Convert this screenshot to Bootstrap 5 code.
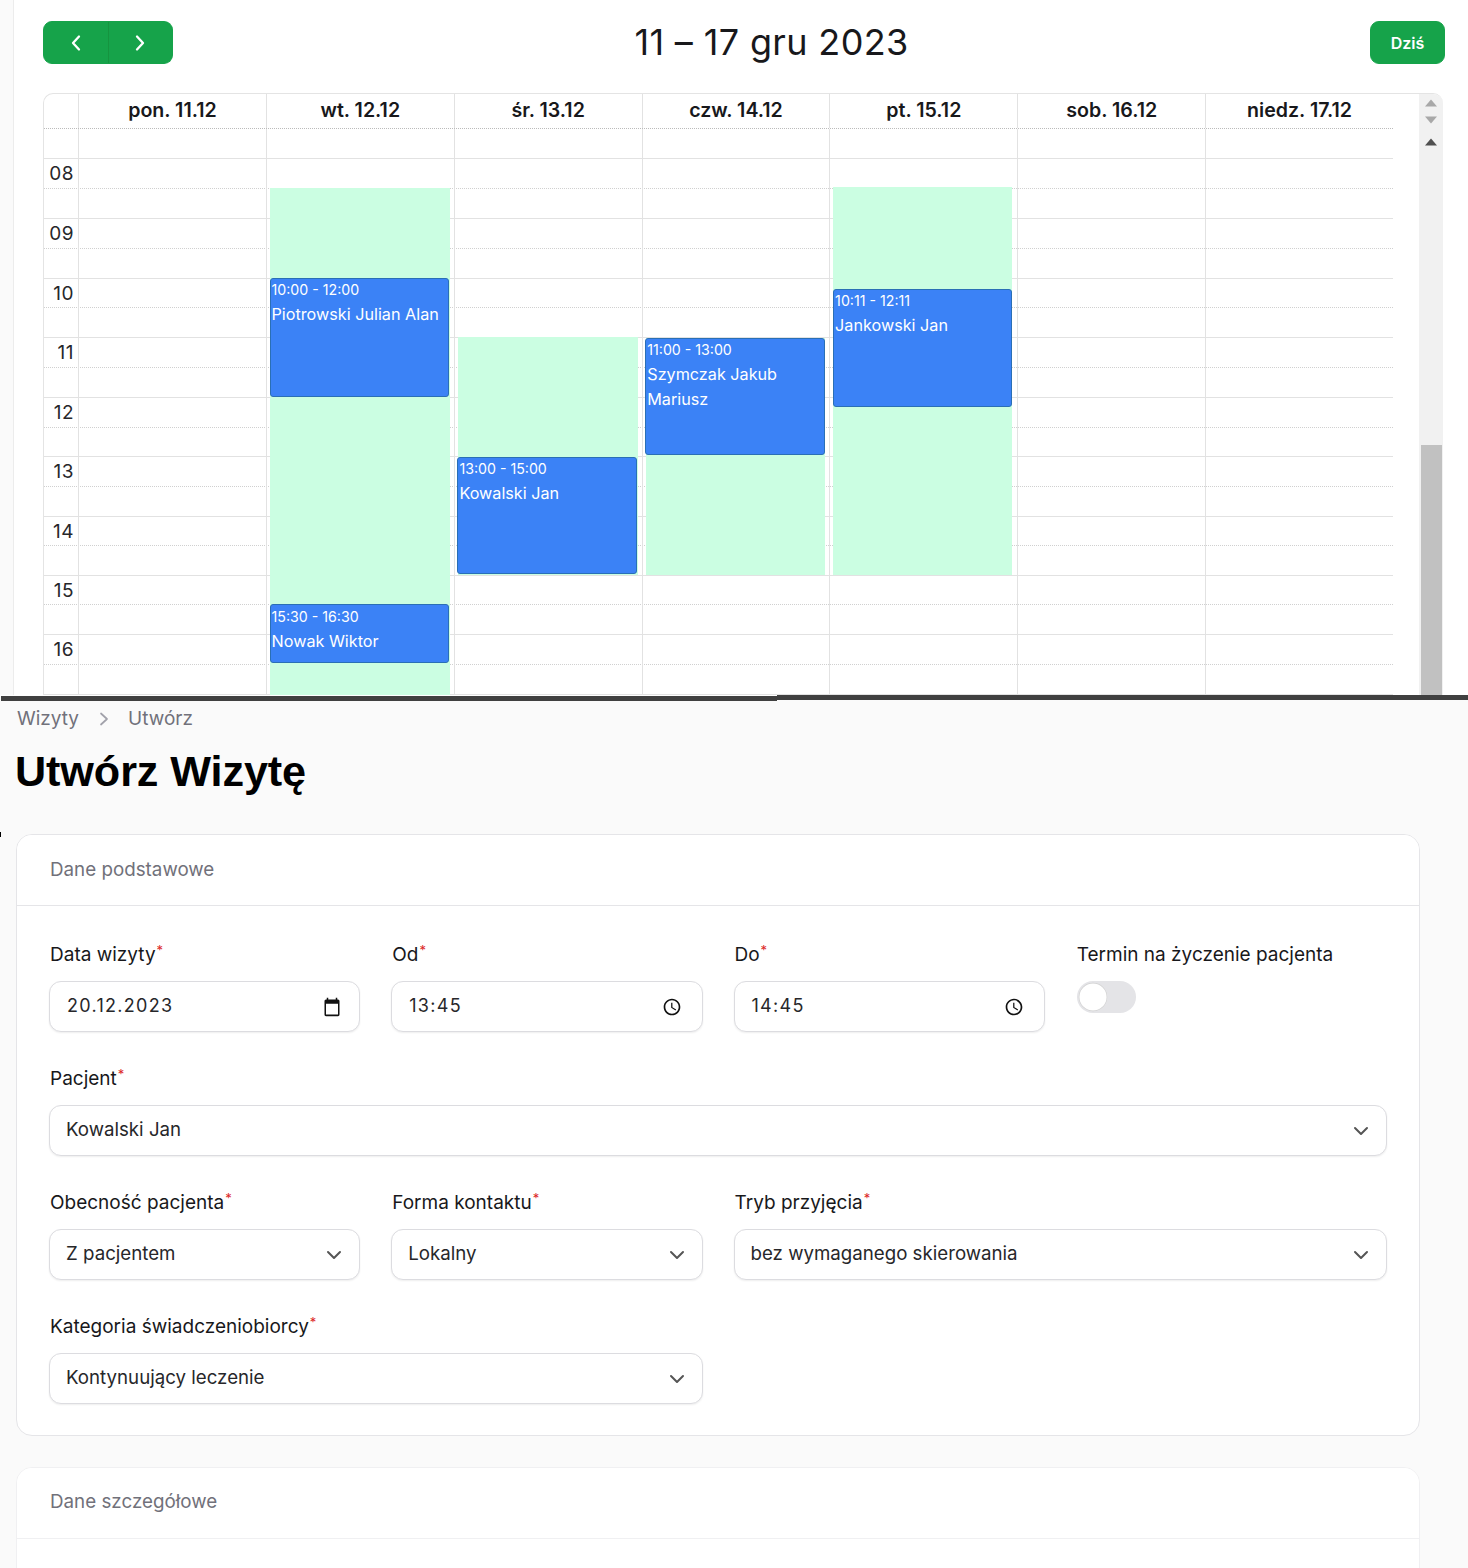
<!doctype html>
<html lang="pl">
<head>
<meta charset="utf-8">
<title>Utwórz Wizytę</title>
<link href="https://cdn.jsdelivr.net/npm/bootstrap@5.3.0/dist/css/bootstrap.min.css" rel="stylesheet">
<style>
html,body{height:1568px;overflow:hidden;background:#fafafa;font-family:Inter,"Liberation Sans",sans-serif;color:#18181b}
.top-area{height:695px;background:#fff;overflow:hidden}
.side-strip{width:14px;background:#fafafa;border-right:1px solid #ececec;flex:none}
.cal-main{padding:21px 23px 0 29px;min-width:0}
.cal-toolbar{height:43px;margin-bottom:29px}
.btn-cal{--bs-btn-bg:#16a34a;--bs-btn-border-color:#16a34a;--bs-btn-hover-bg:#16a34a;--bs-btn-color:#fff;--bs-btn-hover-color:#fff;--bs-btn-font-size:16px;--bs-btn-font-weight:600;--bs-btn-border-radius:9px;height:43px}
.btn-nav{width:65.5px;padding:0;display:flex;align-items:center;justify-content:center}
.btn-nav+.btn-nav{border-left-color:#15943f}
.btn-today{width:75px;padding:0}
.cal-title{font-size:36px;font-weight:400;line-height:43px;margin:0;color:#18181b;letter-spacing:.35px}
.cal-frame{height:602px;width:1400px;border:solid #e4e4e4;border-width:1px 0 0 1px;border-top-left-radius:10px;border-top-right-radius:10px;overflow:hidden}
.cal-grid{width:1349px;flex:none}
.cal-gap{width:26px;flex:none}
.cal-head{height:35px;display:grid;grid-template-columns:34px repeat(7,1fr);border-bottom:1px dotted #bbb}
.cal-head>div{border-left:1px solid #e2e2e2;text-align:center;font-size:19.6px;font-weight:600;line-height:33px;color:#18181b}
.cal-head>div:first-child{border-left:0}
.cal-body{position:relative;height:566px;overflow:hidden}
.slot-row{height:30px;border-top:1px dotted #d0d0d0}
.slot-row.hour{border-top:1px solid #e2e2e2}
.slot-row:first-child{border-top:0}
.slot-row.short-row{height:29px}
.slot-label{width:30px;text-align:right;font-size:19px;line-height:29px;color:#27272a;letter-spacing:.5px}
.cal-cols{position:absolute;top:0;bottom:0;left:34px;right:0;display:grid;grid-template-columns:repeat(7,1fr)}
.cal-cols>div{position:relative;border-left:1px solid #e2e2e2}
.zone{position:absolute;left:3px;right:4px;background:#cbfee2}
.zone-narrow{right:5px}
.appt{position:absolute;left:2.7px;right:4.85px;background:#3b82f6;border:1px solid #2a6fb5;border-radius:3px;color:#fff;padding:0 1px;overflow:hidden}
.appt-nudge{padding-top:1px}
.appt-time{font-size:14.2px;line-height:22px;display:block}
.appt-name{font-size:16.2px;line-height:25px;display:block;margin-top:1px}
.fake-scroll{width:25px;flex:none;background:#f1f1f1;position:relative;border-right:1px solid #e8e8e8}
.fake-scroll svg{display:block;position:absolute;left:6px}
.fake-thumb{position:absolute;left:2px;width:21px;top:351px;bottom:0;background:#c1c1c1}
.seam{height:6px;display:flex;background:linear-gradient(#fff 1px,#fafafa 1px)}
.seam-a{width:776px;margin:1px 0 0 1px;height:5px;background:#404040}
.seam-b{flex:1;height:5px;background:#404040}
.form-area{padding:0 48px 0 16px;position:relative}
.tick{position:absolute;left:0;top:131px;width:1px;height:5px;background:#000}
.crumbs{font-size:19px;line-height:24px;color:#71717a;padding:6px 0 0 1px;gap:19.5px}
.page-title{font-family:"Liberation Sans",Arial,sans-serif;font-weight:700;font-size:43.2px;line-height:52px;color:#000;margin:14px 0 37px -1px;letter-spacing:-.1px}
.panel{--bs-card-border-color:#e5e5e8;--bs-card-border-radius:16px;--bs-card-inner-border-radius:15px;--bs-card-cap-bg:#fff;--bs-card-bg:#fff;margin-bottom:31px}
.panel-soft{--bs-card-border-color:#f0f0f2}
.panel .card-header{height:71px;padding:0 33px;display:flex;align-items:center;font-size:18.8px;color:#71717a;border-bottom-color:#e5e5e8}
.panel-soft .card-header{border-bottom-color:#f0f0f2;padding-bottom:2px}
.panel .card-body{padding:33px 32px 31px 32px}
.field-grid{display:grid;grid-template-columns:repeat(4,1fr);column-gap:31px;row-gap:31px}
.span-2{grid-column:span 2}
.span-4{grid-column:span 4}
.fld-label{display:block;font-size:19px;line-height:24px;height:24px;margin:4px 0 14px 1px;color:#18181b}
.req{color:#dc2626;font-size:13px;position:relative;top:-6px;line-height:0;margin-left:1px}
.fld-box{height:51px;border:1px solid #dcdce0;border-radius:12px;box-shadow:0 1px 2px rgba(0,0,0,.07);font-size:18px;color:#27272a;padding:0 20px 2px 17px;background-color:#fff}
.fld-box.date-box{padding-right:18px}
.fld-box svg{position:relative;top:1px}
.fld-box .fld-val{letter-spacing:1.3px}
.fld-sel{height:51px;border:1px solid #dcdce0;border-radius:12px;box-shadow:0 1px 2px rgba(0,0,0,.07);font-size:18.7px;color:#27272a;padding:0 40px 0 16px;background-position:right 17px center;background-size:16px 16px;--bs-form-select-bg-img:url("data:image/svg+xml,%3csvg xmlns='http://www.w3.org/2000/svg' viewBox='0 0 16 16'%3e%3cpath fill='none' stroke='%23555' stroke-linecap='round' stroke-linejoin='round' stroke-width='2' d='m2 5 6 6 6-6'/%3e%3c/svg%3e")}
.toggle-wrap{padding:0;margin:1px 0 0 1px;min-height:0;height:33px}
.toggle-wrap .form-check-input{width:59px;height:32px;margin:0;background-color:#e4e4e7;border:0;float:none;--bs-form-switch-bg:none;background-image:url("data:image/svg+xml,%3csvg xmlns='http://www.w3.org/2000/svg' viewBox='-4 -4 8 8'%3e%3ccircle r='3.55' fill='%23d0d0d0'/%3e%3ccircle r='3.4' fill='%23fff'/%3e%3c/svg%3e");background-position:left center}
</style>
</head>
<body>
<div class="top-area d-flex">
  <div class="side-strip"></div>
  <div class="cal-main flex-grow-1">
    <div class="cal-toolbar d-flex justify-content-between align-items-center">
      <div class="btn-group" role="group">
        <button type="button" class="btn btn-cal btn-nav" aria-label="Poprzedni"><svg width="14" height="18" viewBox="0 0 14 18"><path d="M10 2.500 4 9l6 6.500" fill="none" stroke="#fff" stroke-width="2.300" stroke-linecap="round" stroke-linejoin="round"/></svg></button>
        <button type="button" class="btn btn-cal btn-nav" aria-label="Następny"><svg width="14" height="18" viewBox="0 0 14 18"><path d="M4 2.500 10 9l-6 6.500" fill="none" stroke="#fff" stroke-width="2.300" stroke-linecap="round" stroke-linejoin="round"/></svg></button>
      </div>
      <h2 class="cal-title">11 – 17 gru 2023</h2>
      <button type="button" class="btn btn-cal btn-today">Dziś</button>
    </div>
    <div class="cal-frame d-flex">
      <div class="cal-grid">
        <div class="cal-head">
          <div></div><div>pon. 11.12</div><div>wt. 12.12</div><div>śr. 13.12</div><div>czw. 14.12</div><div>pt. 15.12</div><div>sob. 16.12</div><div>niedz. 17.12</div>
        </div>
        <div class="cal-body">
          <div class="slot-row short-row"></div>
          <div class="slot-row hour"><div class="slot-label">08</div></div>
          <div class="slot-row"></div>
          <div class="slot-row hour"><div class="slot-label">09</div></div>
          <div class="slot-row"></div>
          <div class="slot-row hour short-row"><div class="slot-label">10</div></div>
          <div class="slot-row"></div>
          <div class="slot-row hour"><div class="slot-label">11</div></div>
          <div class="slot-row"></div>
          <div class="slot-row hour"><div class="slot-label">12</div></div>
          <div class="slot-row short-row"></div>
          <div class="slot-row hour"><div class="slot-label">13</div></div>
          <div class="slot-row"></div>
          <div class="slot-row hour short-row"><div class="slot-label">14</div></div>
          <div class="slot-row"></div>
          <div class="slot-row hour short-row"><div class="slot-label">15</div></div>
          <div class="slot-row"></div>
          <div class="slot-row hour"><div class="slot-label">16</div></div>
          <div class="slot-row"></div>
          <div class="slot-row hour"></div>
          <div class="cal-cols">
            <div></div>
            <div>
              <div class="zone" style="top:59px;height:520px"></div>
              <div class="appt" style="top:149px;height:119px"><span class="appt-time">10:00 - 12:00</span><span class="appt-name">Piotrowski Julian Alan</span></div>
              <div class="appt appt-nudge" style="top:475px;height:59px"><span class="appt-time">15:30 - 16:30</span><span class="appt-name">Nowak Wiktor</span></div>
            </div>
            <div>
              <div class="zone" style="top:208px;height:238px"></div>
              <div class="appt" style="top:328px;height:117px"><span class="appt-time">13:00 - 15:00</span><span class="appt-name">Kowalski Jan</span></div>
            </div>
            <div>
              <div class="zone" style="top:209px;height:237px"></div>
              <div class="appt" style="top:209px;height:117px"><span class="appt-time">11:00 - 13:00</span><span class="appt-name">Szymczak Jakub Mariusz</span></div>
            </div>
            <div>
              <div class="zone zone-narrow" style="top:58px;height:388px"></div>
              <div class="appt" style="top:160px;height:118px"><span class="appt-time">10:11 - 12:11</span><span class="appt-name">Jankowski Jan</span></div>
            </div>
            <div></div>
            <div></div>
          </div>
        </div>
      </div>
      <div class="cal-gap"></div>
      <div class="fake-scroll">
        <svg style="top:5px" width="12" height="8" viewBox="0 0 12 8"><path d="M6 .5 12 7.500H0z" fill="#a8a8a8"/></svg>
        <svg style="top:22px" width="12" height="8" viewBox="0 0 12 8"><path d="M0 .5H12L6 7.500z" fill="#a8a8a8"/></svg>
        <svg style="top:44px" width="12" height="8" viewBox="0 0 12 8"><path d="M6 .5 12 7.500H0z" fill="#505050"/></svg>
        <div class="fake-thumb"></div>
      </div>
    </div>
  </div>
</div>
<div class="seam"><div class="seam-a"></div><div class="seam-b"></div></div>
<div class="form-area">
  <div class="tick"></div>
  <div class="crumbs d-flex align-items-center">
    <span>Wizyty</span>
    <svg width="10" height="14" viewBox="0 0 10 14"><path d="M2 1.500 8 7l-6 5.500" fill="none" stroke="#a1a1aa" stroke-width="1.700" stroke-linecap="round" stroke-linejoin="round"/></svg>
    <span>Utwórz</span>
  </div>
  <h1 class="page-title">Utwórz Wizytę</h1>
  <div class="card panel">
    <div class="card-header">Dane podstawowe</div>
    <div class="card-body">
      <div class="field-grid">
        <div>
          <label class="fld-label">Data wizyty<span class="req">*</span></label>
          <div class="fld-box date-box d-flex align-items-center justify-content-between">
            <span class="fld-val">20.12.2023</span>
            <svg width="18" height="20" viewBox="0 0 24 24" preserveAspectRatio="none"><path fill="#111" d="M20 3h-1V1h-2v2H7V1H5v2H4c-1.100 0-2 .9-2 2v16c0 1.100.9 2 2 2h16c1.100 0 2-.9 2-2V5c0-1.100-.9-2-2-2zm0 18H4V8h16v13z"/></svg>
          </div>
        </div>
        <div>
          <label class="fld-label">Od<span class="req">*</span></label>
          <div class="fld-box d-flex align-items-center justify-content-between">
            <span class="fld-val">13:45</span>
            <svg width="20" height="20" viewBox="0 0 24 24"><path fill="#111" d="M11.990 2C6.470 2 2 6.480 2 12s4.470 10 9.990 10C17.520 22 22 17.520 22 12S17.520 2 11.990 2zM12 20c-4.420 0-8-3.580-8-8s3.580-8 8-8 8 3.580 8 8-3.580 8-8 8zm.5-13H11v6l5.250 3.150.75-1.230-4.500-2.670z"/></svg>
          </div>
        </div>
        <div>
          <label class="fld-label">Do<span class="req">*</span></label>
          <div class="fld-box d-flex align-items-center justify-content-between">
            <span class="fld-val">14:45</span>
            <svg width="20" height="20" viewBox="0 0 24 24"><path fill="#111" d="M11.990 2C6.470 2 2 6.480 2 12s4.470 10 9.990 10C17.520 22 22 17.520 22 12S17.520 2 11.990 2zM12 20c-4.420 0-8-3.580-8-8s3.580-8 8-8 8 3.580 8 8-3.580 8-8 8zm.5-13H11v6l5.250 3.150.75-1.230-4.500-2.670z"/></svg>
          </div>
        </div>
        <div>
          <label class="fld-label">Termin na życzenie pacjenta</label>
          <div class="form-check form-switch toggle-wrap"><input class="form-check-input" type="checkbox" role="switch" aria-label="Termin na życzenie pacjenta"></div>
        </div>
        <div class="span-4">
          <label class="fld-label">Pacjent<span class="req">*</span></label>
          <select class="form-select fld-sel"><option>Kowalski Jan</option></select>
        </div>
        <div>
          <label class="fld-label">Obecność pacjenta<span class="req">*</span></label>
          <select class="form-select fld-sel"><option>Z pacjentem</option></select>
        </div>
        <div>
          <label class="fld-label">Forma kontaktu<span class="req">*</span></label>
          <select class="form-select fld-sel"><option>Lokalny</option></select>
        </div>
        <div class="span-2">
          <label class="fld-label">Tryb przyjęcia<span class="req">*</span></label>
          <select class="form-select fld-sel"><option>bez wymaganego skierowania</option></select>
        </div>
        <div class="span-2">
          <label class="fld-label">Kategoria świadczeniobiorcy<span class="req">*</span></label>
          <select class="form-select fld-sel"><option>Kontynuujący leczenie</option></select>
        </div>
      </div>
    </div>
  </div>
  <div class="card panel panel-soft">
    <div class="card-header">Dane szczegółowe</div>
    <div class="card-body"></div>
  </div>
</div>
<script src="https://cdn.jsdelivr.net/npm/bootstrap@5.3.0/dist/js/bootstrap.bundle.min.js"></script>
</body>
</html>
